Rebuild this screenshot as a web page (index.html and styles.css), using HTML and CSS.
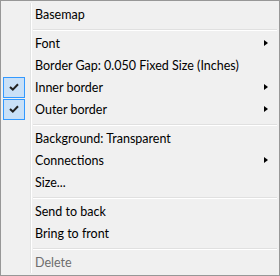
FILE: index.html
```html
<!DOCTYPE html>
<html lang="en">
<head>
    <meta charset="UTF-8">
    <title>Context menu</title>
    <link rel="stylesheet" href="styles.css">
</head>
<body>
    <div class="menu">
        <div class="item"><span class="gutter"></span><span class="label">Basemap</span></div>
        <div class="sep"></div>
        <div class="item"><span class="gutter"></span><span class="label">Font</span><span class="arrow"></span></div>
        <div class="item"><span class="gutter"></span><span class="label">Border Gap: 0.050 Fixed Size (Inches)</span></div>
        <div class="item">
            <span class="gutter"><span class="check"><svg width="10" height="8" viewBox="0 0 10 8"><path d="M1 4 L3.8 6.6 L9 1.2" fill="none" stroke="#222" stroke-width="2"/></svg></span></span>
            <span class="label">Inner border</span><span class="arrow"></span>
        </div>
        <div class="item">
            <span class="gutter"><span class="check"><svg width="10" height="8" viewBox="0 0 10 8"><path d="M1 4 L3.8 6.6 L9 1.2" fill="none" stroke="#222" stroke-width="2"/></svg></span></span>
            <span class="label">Outer border</span><span class="arrow"></span>
        </div>
        <div class="sep"></div>
        <div class="item"><span class="gutter"></span><span class="label">Background: Transparent</span></div>
        <div class="item"><span class="gutter"></span><span class="label">Connections</span><span class="arrow"></span></div>
        <div class="item"><span class="gutter"></span><span class="label">Size...</span></div>
        <div class="sep"></div>
        <div class="item"><span class="gutter"></span><span class="label">Send to back</span></div>
        <div class="item"><span class="gutter"></span><span class="label">Bring to front</span></div>
        <div class="sep"></div>
        <div class="item disabled"><span class="gutter"></span><span class="label">Delete</span></div>
    </div>
</body>
</html>
```

FILE: styles.css
```css
body {
    margin: 0;
    font-family: Lato, "Noto Sans", sans-serif;
    font-size: 12.5px;
}
.menu {
    width: 280px;
    height: 276px;
    box-sizing: border-box;
    border: 1px solid #979797;
    background-color: #f0f0f0;
    padding: 2px;
    position: relative;
}
.menu::before {
    content: "";
    position: absolute;
    top: 2px;
    bottom: 2px;
    left: 29px;
    width: 1px;
    background-color: #e2e3e3;
    border-right: 1px solid #fff;
}
.item {
    display: flex;
    align-items: center;
    height: 22px;
    color: #000;
}
.item.disabled {
    color: #6d6d6d;
}
.gutter {
    width: 32px;
    height: 22px;
    display: flex;
    align-items: center;
    box-sizing: border-box;
}
.check {
    width: 22px;
    height: 21px;
    box-sizing: border-box;
    border: 1px solid #3399ff;
    background-color: #c9e0f7;
    display: flex;
    align-items: center;
    justify-content: center;
}
.label {
    flex: 1;
    white-space: nowrap;
}
.arrow {
    width: 0;
    height: 0;
    border-top: 3.5px solid transparent;
    border-bottom: 3.5px solid transparent;
    border-left: 4px solid #000;
    margin-right: 9px;
}
.sep {
    height: 1px;
    margin: 4px 0 1px 30px;
    background-color: #e0e0e0;
    border-bottom: 1px solid #fff;
}
```
